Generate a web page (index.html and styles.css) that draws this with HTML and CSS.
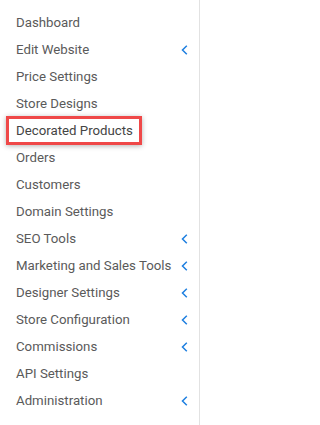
FILE: index.html
```html
<!DOCTYPE html>
<html>
<head>
<meta charset="utf-8">
<link rel="stylesheet" href="styles.css">
</head>
<body>
<nav class="sidebar">
  <ul class="menu">
    <li class="item"><span class="label">Dashboard</span></li>
    <li class="item"><span class="label">Edit Website</span><svg class="chev" viewBox="0 0 7 10"><polyline points="5.8,0.8 1.5,5 5.8,9.2"/></svg></li>
    <li class="item"><span class="label">Price Settings</span></li>
    <li class="item"><span class="label">Store Designs</span></li>
    <li class="item"><span class="label highlight">Decorated Products</span></li>
    <li class="item"><span class="label">Orders</span></li>
    <li class="item"><span class="label">Customers</span></li>
    <li class="item"><span class="label">Domain Settings</span></li>
    <li class="item"><span class="label">SEO Tools</span><svg class="chev" viewBox="0 0 7 10"><polyline points="5.8,0.8 1.5,5 5.8,9.2"/></svg></li>
    <li class="item"><span class="label">Marketing and Sales Tools</span><svg class="chev" viewBox="0 0 7 10"><polyline points="5.8,0.8 1.5,5 5.8,9.2"/></svg></li>
    <li class="item"><span class="label">Designer Settings</span><svg class="chev" viewBox="0 0 7 10"><polyline points="5.8,0.8 1.5,5 5.8,9.2"/></svg></li>
    <li class="item"><span class="label">Store Configuration</span><svg class="chev" viewBox="0 0 7 10"><polyline points="5.8,0.8 1.5,5 5.8,9.2"/></svg></li>
    <li class="item"><span class="label">Commissions</span><svg class="chev" viewBox="0 0 7 10"><polyline points="5.8,0.8 1.5,5 5.8,9.2"/></svg></li>
    <li class="item"><span class="label">API Settings</span></li>
    <li class="item"><span class="label">Administration</span><svg class="chev" viewBox="0 0 7 10"><polyline points="5.8,0.8 1.5,5 5.8,9.2"/></svg></li>
  </ul>
</nav>
</body>
</html>
```

FILE: styles.css
```css
html, body {
  margin: 0;
  padding: 0;
  background: #ffffff;
}
.sidebar {
  width: 199px;
  height: 425px;
  border-right: 1px solid #e2e2e2;
  font-family: Roboto, "Liberation Sans", sans-serif;
  font-size: 13.25px;
  color: #5a5a5a;
}
.menu {
  list-style: none;
  margin: 0;
  padding: 9px 0 0 0;
}
.item {
  display: flex;
  align-items: center;
  height: 27px;
  padding: 0 11px 0 16px;
  white-space: nowrap;
}
.label {
  line-height: 15px;
}
.highlight {
  display: inline-flex;
  align-items: center;
  height: 23px;
  margin-left: -10px;
  padding: 0 6px 0 7px;
  border: 3px solid #ef4848;
  box-shadow: 0 1px 5px rgba(0, 0, 0, 0.3);
  color: #444444;
}
.chev {
  margin-left: auto;
  width: 7px;
  height: 10px;
  fill: none;
  stroke: #1e7fe0;
  stroke-width: 1.5;
}
```
